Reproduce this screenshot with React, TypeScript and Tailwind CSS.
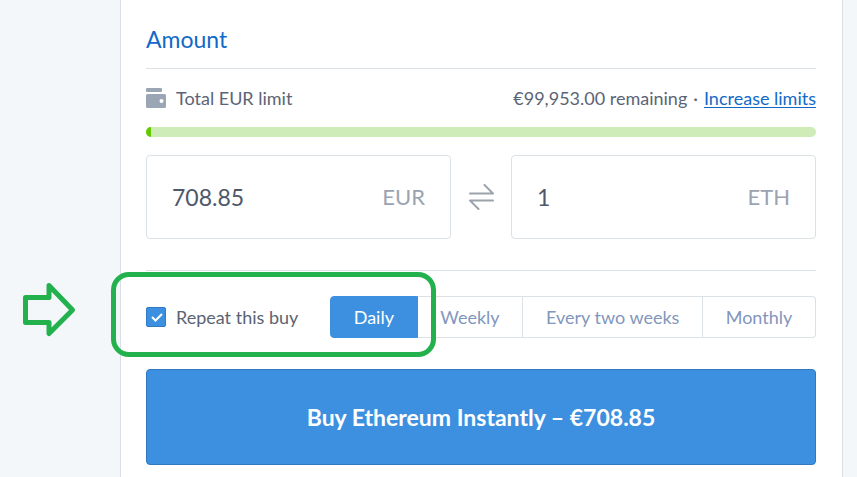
import { useState } from "react";

const INTERVALS = ["Daily", "Weekly", "Every two weeks", "Monthly"];

function WalletIcon() {
  return (
    <svg width="20" height="20" viewBox="0 0 20 20" fill="#9ba6b5" aria-hidden="true">
      <rect x="0" y="0" width="16" height="4" rx="1" />
      <path
        fillRule="evenodd"
        d="M1.5 6H18.5A1.5 1.5 0 0 1 20 7.500V18.500A1.500 1.500 0 0 1 18.500 20H1.500A1.500 1.500 0 0 1 0 18.500V7.500A1.500 1.500 0 0 1 1.500 6ZM15.500 11A2 2 0 1 0 15.500 15A2 2 0 1 0 15.500 11Z"
      />
    </svg>
  );
}

function SwapIcon() {
  return (
    <svg
      width="26"
      height="26"
      viewBox="0 0 26 26"
      fill="none"
      stroke="#9ba3ac"
      strokeWidth="2"
      strokeLinecap="round"
      strokeLinejoin="round"
      aria-hidden="true"
    >
      <path d="M2 9.500H25L16.500 1" />
      <path d="M25 16.500H2L10.500 25" />
    </svg>
  );
}

function AmountField({ code, initial }: { code: string; initial: string }) {
  return (
    <label className="flex h-[84px] min-w-0 flex-1 items-center rounded border border-[#dbe1e4] px-[25px] text-[23px]">
      <input
        className="w-full min-w-0 flex-1 bg-transparent text-[#4e5868] outline-none"
        defaultValue={initial}
        aria-label={`Amount in ${code}`}
      />
      <span className="text-[22px] text-[#9ba3b2]">{code}</span>
    </label>
  );
}

export default function App() {
  const [interval, setInterval] = useState("Daily");

  return (
    <div className="min-h-screen overflow-hidden bg-[#f4f7fa] pr-[14px] pl-[120px] font-['Lato','Open_Sans',sans-serif] text-[18px] leading-6 text-[#5b6474]">
      <main className="min-h-screen border-x border-[#dadfe6] bg-white pt-6 pr-[26px] pl-[25px] pb-3">
        <h2 className="border-b border-[#dbe1e4] pb-[14px] text-[23px] leading-[30px] text-[#1269c7]">
          Amount
        </h2>

        <div className="mt-[17px] flex items-center">
          <WalletIcon />
          <span className="ml-[10px]">Total EUR limit</span>
          <span className="ml-auto flex gap-[6px]">
            <span>€99,953.00 remaining</span>
            <span>·</span>
            <a href="#limits" className="text-[#1269c7] underline underline-offset-2">
              Increase limits
            </a>
          </span>
        </div>

        <div
          className="mt-[17px] h-[10px] overflow-hidden rounded-full bg-[#cdecb8]"
          role="progressbar"
          aria-label="EUR limit used"
          aria-valuenow={1}
        >
          <div className="h-full w-[5px] bg-[#61ca00]" />
        </div>

        <div className="mt-[18px] flex items-center">
          <AmountField code="EUR" initial="708.85" />
          <button type="button" className="flex w-[60px] justify-center" aria-label="Swap currencies">
            <SwapIcon />
          </button>
          <AmountField code="ETH" initial="1" />
        </div>

        <div className="relative mt-[31px] flex items-center justify-between border-t border-[#dbe1e4] pt-[25px]">
          <label className="flex items-center gap-[10px]">
            <span className="grid">
              <input
                type="checkbox"
                defaultChecked
                className="peer col-start-1 row-start-1 size-5 appearance-none rounded-[2px] border border-[#2e7bc4] bg-white checked:bg-[#3c90df]"
              />
              <svg
                className="pointer-events-none col-start-1 row-start-1 hidden size-5 peer-checked:block"
                viewBox="0 0 20 20"
                fill="none"
                stroke="white"
                strokeWidth="2"
                aria-hidden="true"
              >
                <path d="M6 10L9.500 13.500L16 7" />
              </svg>
            </span>
            Repeat this buy
          </label>

          <div className="flex h-[42px] w-[486px]" role="group" aria-label="Repeat interval">
            {INTERVALS.map((name) => (
              <button
                key={name}
                type="button"
                aria-pressed={interval === name}
                onClick={() => setInterval(name)}
                className={
                  "flex-auto border-y border-r px-5 whitespace-nowrap first:rounded-l first:border-l last:rounded-r " +
                  (interval === name
                    ? "border-[#3c90df] bg-[#3c90df] text-white"
                    : "border-[#dbe1e4] bg-white text-[#8296bd]")
                }
              >
                {name}
              </button>
            ))}
          </div>

          <div className="pointer-events-none absolute top-px -left-[35px] h-[85px] w-[325px] rounded-[18px] border-[5px] border-[#22b14c]" />
          <svg
            className="pointer-events-none absolute top-[11px] -left-[124px]"
            width="54"
            height="56"
            viewBox="0 0 54 56"
            fill="none"
            stroke="#22b14c"
            strokeWidth="5"
            strokeLinejoin="round"
            aria-hidden="true"
          >
            <path d="M3.500 15.500H27V3.500L50.500 28L27 51.500V40.500H3.500Z" />
          </svg>
        </div>

        <button
          type="button"
          className="mt-[31px] h-24 w-full rounded border border-[#3079c1] bg-[#3c90df] text-[23px] font-bold text-white"
        >
          Buy Ethereum Instantly – €708.85
        </button>
      </main>
    </div>
  );
}
